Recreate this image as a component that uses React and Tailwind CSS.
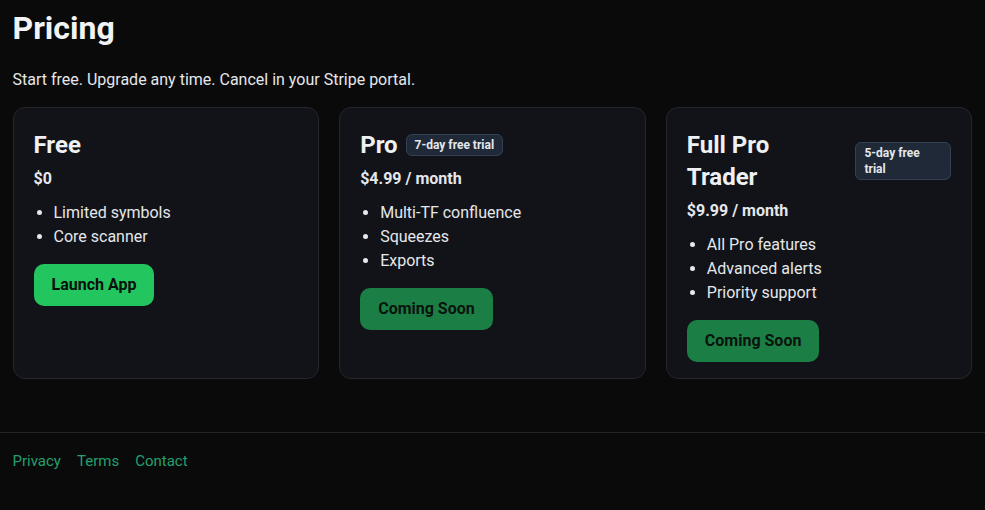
const plans = [
  {
    name: "Free",
    price: "$0",
    features: ["Limited symbols", "Core scanner"],
    cta: "Launch App",
    active: true,
  },
  {
    name: "Pro",
    badge: "7-day free trial",
    price: "$4.99 / month",
    features: ["Multi-TF confluence", "Squeezes", "Exports"],
    cta: "Coming Soon",
  },
  {
    name: "Full Pro Trader",
    badge: "5-day free trial",
    price: "$9.99 / month",
    features: ["All Pro features", "Advanced alerts", "Priority support"],
    cta: "Coming Soon",
    wrap: true,
  },
];

function PlanCard({ plan }) {
  return (
    <div className="rounded-xl border border-[#25272c] bg-[#111318] px-5 pt-[21px] pb-4">
      <div className="flex items-center gap-2">
        <h3
          className={
            plan.wrap
              ? "w-[150px] text-[24px] font-bold leading-8 text-[#eef0f3]"
              : "text-[24px] font-bold leading-8 text-[#eef0f3]"
          }
        >
          {plan.name}
        </h3>
        {plan.badge && (
          <span
            className={
              plan.wrap
                ? "ml-auto w-[96px] rounded-md border border-[#334155] bg-[#1f2937] px-2 py-[2px] text-[12px] font-bold leading-4 text-[#e5e7eb]"
                : "rounded-md border border-[#334155] bg-[#1f2937] px-2 py-[2px] text-[12px] font-bold leading-4 text-[#e5e7eb]"
            }
          >
            {plan.badge}
          </span>
        )}
      </div>
      <p className="mt-1.5 text-[16px] font-bold leading-6 text-[#e5e7eb]">
        {plan.price}
      </p>
      <ul className="mt-2.5 list-disc pl-5 text-[16px] leading-6 text-[#e5e7eb]">
        {plan.features.map((f) => (
          <li key={f}>{f}</li>
        ))}
      </ul>
      <button
        className={
          plan.active
            ? "mt-[15px] rounded-[10px] bg-[#22c55e] px-[18px] py-[9px] text-[16px] font-bold leading-6 text-[#0a0f0b]"
            : "mt-[15px] rounded-[10px] bg-[#1b7f45] px-[18px] py-[9px] text-[16px] font-bold leading-6 text-[#0a130d]"
        }
      >
        {plan.cta}
      </button>
    </div>
  );
}

export default function App() {
  return (
    <div
      className="min-h-screen bg-[#0a0a0a] text-[#e5e7eb]"
      style={{ fontFamily: "Roboto, 'Noto Sans', sans-serif" }}
    >
      <main className="mx-auto max-w-[960px] pt-2">
        <h1 className="text-[32px] font-bold leading-10 text-[#f1f3f5]">Pricing</h1>
        <p className="mt-5 text-[16px] leading-6 text-[#e5e7eb]">
          Start free. Upgrade any time. Cancel in your Stripe portal.
        </p>
        <div className="mt-[15px] grid grid-cols-3 gap-5">
          {plans.map((plan) => (
            <PlanCard key={plan.name} plan={plan} />
          ))}
        </div>
      </main>
      <footer className="mt-[53px] border-t border-[#232323]">
        <div className="mx-auto flex max-w-[960px] gap-4 pt-4 text-[15px] leading-6">
          <a href="#" className="text-[#22a06d]">Privacy</a>
          <a href="#" className="text-[#22a06d]">Terms</a>
          <a href="#" className="text-[#22a06d]">Contact</a>
        </div>
      </footer>
    </div>
  );
}
